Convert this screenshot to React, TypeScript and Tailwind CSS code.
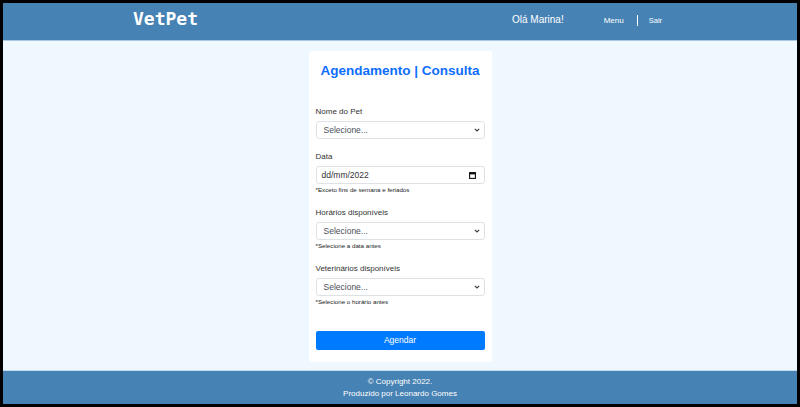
import React from "react";

const sans = { fontFamily: '"Liberation Sans", Arial, sans-serif' };

function Chevron() {
  return (
    <svg width="6" height="4" viewBox="0 0 6 4" className="shrink-0">
      <path d="M0.8 0.8 L3 3 L5.2 0.8" fill="none" stroke="#343a40" strokeWidth="1.1" />
    </svg>
  );
}

function CalendarIcon() {
  return (
    <svg width="7" height="7" viewBox="0 0 7 7" className="shrink-0">
      <rect x="0.6" y="0.6" width="5.8" height="5.8" fill="none" stroke="#111" strokeWidth="1.1" />
      <rect x="0.6" y="0.6" width="5.8" height="1.8" fill="#111" />
    </svg>
  );
}

function SelectBox({ text }: { text: string }) {
  return (
    <div className="flex h-[18px] items-center justify-between rounded-[3px] border border-[#dee2e6] bg-white pl-[7px] pr-[4px]">
      <span className="text-[8.5px] leading-none text-[#495057]">{text}</span>
      <Chevron />
    </div>
  );
}

function Label({ children, className }: { children: React.ReactNode; className?: string }) {
  return <div className={"h-[10px] text-[8px] leading-[10px] text-[#333] " + (className ?? "")}>{children}</div>;
}

function Note({ children }: { children: React.ReactNode }) {
  return <div className="mt-[2px] h-[8px] text-[6.2px] leading-[8px] text-[#222]">{children}</div>;
}

export default function App() {
  return (
    <div className="h-[407px] w-[800px] bg-black p-[3px]" style={sans}>
      <div className="flex h-[401px] flex-col bg-[#f0f8ff]">
        {/* Header */}
        <header className="flex h-[38px] shrink-0 items-center border-b border-[#a9c9e4] bg-[#4682b4] pb-[3px] text-white">
          <div className="w-[509px] pl-[130px]">
            <span
              className="text-[18px] font-bold leading-none"
              style={{ fontFamily: '"DejaVu Sans Mono", monospace' }}
            >
              VetPet
            </span>
          </div>
          <span className="text-[10px] leading-none">Olá Marina!</span>
          <span className="ml-[40px] mt-[1px] text-[8px] leading-none">Menu</span>
          <span className="ml-[13px] mt-[1px] h-[11px] w-px bg-white" />
          <span className="ml-[11px] mt-[1px] text-[7.5px] leading-none">Sair</span>
        </header>

        {/* Main */}
        <main className="flex h-[329px] shrink-0 justify-center pt-[10px]">
          <div className="h-[311px] w-[183px] rounded-[3px] bg-white px-[7px] pt-[12px]">
            <h1 className="h-[16px] text-center text-[13.5px] font-bold leading-[16px] text-[#0d6efd]">
              Agendamento | Consulta
            </h1>

            <Label className="mt-[28px]">Nome do Pet</Label>
            <div className="mt-[4px]">
              <SelectBox text="Selecione..." />
            </div>

            <Label className="mt-[13px]">Data</Label>
            <div className="mt-[4px] flex h-[18px] items-center justify-between rounded-[3px] border border-[#dee2e6] bg-white pl-[5px] pr-[8px]">
              <span className="text-[8.5px] leading-none text-[#333]">dd/mm/2022</span>
              <CalendarIcon />
            </div>
            <Note>*Exceto fins de semana e feriados</Note>

            <Label className="mt-[14px]">Horários disponíveis</Label>
            <div className="mt-[4px]">
              <SelectBox text="Selecione..." />
            </div>
            <Note>*Selecione a data antes</Note>

            <Label className="mt-[14px]">Veterinários disponíveis</Label>
            <div className="mt-[4px]">
              <SelectBox text="Selecione..." />
            </div>
            <Note>*Selecione o horário antes</Note>

            <button className="mt-[25px] flex h-[19px] w-full items-center justify-center rounded-[2px] bg-[#007bff] text-[8.5px] leading-none text-white">
              Agendar
            </button>
          </div>
        </main>

        {/* Footer */}
        <footer className="flex flex-1 flex-col items-center justify-center border-t border-[#c4dcef] bg-[#4682b4] pt-[1px] text-[8px] leading-[12px] text-white">
          <p>© Copyright 2022.</p>
          <p>Produzido por Leonardo Gomes</p>
        </footer>
      </div>
    </div>
  );
}
